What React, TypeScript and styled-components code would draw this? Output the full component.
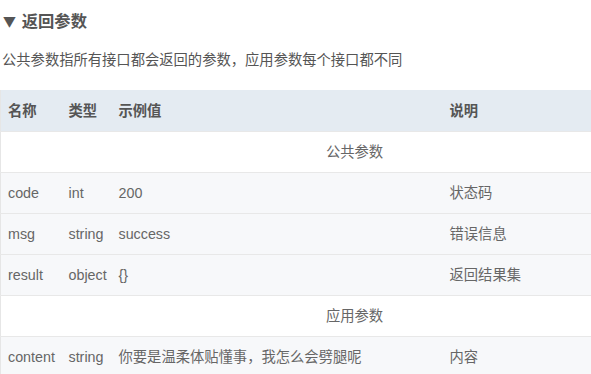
import styled, { createGlobalStyle } from 'styled-components';

const GlobalStyle = createGlobalStyle`
  html, body {
    margin: 0;
    padding: 0;
    background: #fff;
    overflow: hidden;
  }
  body {
    font-family: "Liberation Sans", "Noto Sans CJK SC", sans-serif;
    color: #666;
  }
`

const StyleSection = styled.section`
  width: 708px;
`

const StyleH3 = styled.h3`
  margin: 0;
  padding: 9px 0 0 3px;
  height: 32px;
  box-sizing: border-box;
  display: flex;
  align-items: center;
  font-size: 16.3px;
  font-weight: bold;
  color: #555;
  line-height: 22px;

  span {
    font-family: "DejaVu Sans", sans-serif;
    font-size: 14px;
    transform: scaleX(1.15);
    margin: 0 7px 0 1px;
  }
`

const StyleDesc = styled.p`
  margin: 0;
  padding: 17px 0 0 2px;
  height: 58px;
  box-sizing: border-box;
  font-size: 14.3px;
  line-height: 22px;
  color: #555;
`

const StyleTable = styled.table`
  width: 708px;
  border-collapse: collapse;
  table-layout: fixed;
  border-left: 1px solid #e6e6e6;
  font-size: 14.3px;

  th, td {
    padding: 0 0 0 7px;
    text-align: left;
    white-space: nowrap;
    line-height: 20px;
  }

  th {
    height: 41px;
    background: #e4ebf2;
    color: #555;
    font-weight: bold;
  }
`

const StyleRow = styled.tr<{ $striped?: boolean }>`
  td {
    height: 40px;
    border-top: 1px solid #e8e8e8;
    background: ${p => (p.$striped ? '#f7f8fa' : '#fff')};
    color: #666;
  }
`

const StyleGroupCell = styled.td`
  && {
    text-align: center;
    padding: 0;
  }
`

interface Param {
  name: string
  type: string
  example: string
  desc: string
}

const common: Param[] = [
  { name: 'code', type: 'int', example: '200', desc: '状态码' },
  { name: 'msg', type: 'string', example: 'success', desc: '错误信息' },
  { name: 'result', type: 'object', example: '{}', desc: '返回结果集' },
]

const app: Param[] = [
  { name: 'content', type: 'string', example: '你要是温柔体贴懂事，我怎么会劈腿呢', desc: '内容' },
]

function ParamRows({ title, rows }: { title: string, rows: Param[] }) {
  return (
    <>
      <StyleRow>
        <StyleGroupCell colSpan={4}>{title}</StyleGroupCell>
      </StyleRow>
      {rows.map(r =>
        <StyleRow key={r.name} $striped>
          <td>{r.name}</td>
          <td>{r.type}</td>
          <td>{r.example}</td>
          <td>{r.desc}</td>
        </StyleRow>
      )}
    </>
  )
}

export default function App() {
  return (
    <StyleSection>
      <GlobalStyle />
      <StyleH3><span>▼</span>返回参数</StyleH3>
      <StyleDesc>公共参数指所有接口都会返回的参数，应用参数每个接口都不同</StyleDesc>
      <StyleTable>
        <colgroup>
          <col style={{ width: 61 }} />
          <col style={{ width: 50 }} />
          <col style={{ width: 331 }} />
          <col />
        </colgroup>
        <thead>
          <tr>
            <th>名称</th>
            <th>类型</th>
            <th>示例值</th>
            <th>说明</th>
          </tr>
        </thead>
        <tbody>
          <ParamRows title="公共参数" rows={common} />
          <ParamRows title="应用参数" rows={app} />
        </tbody>
      </StyleTable>
    </StyleSection>
  )
}
